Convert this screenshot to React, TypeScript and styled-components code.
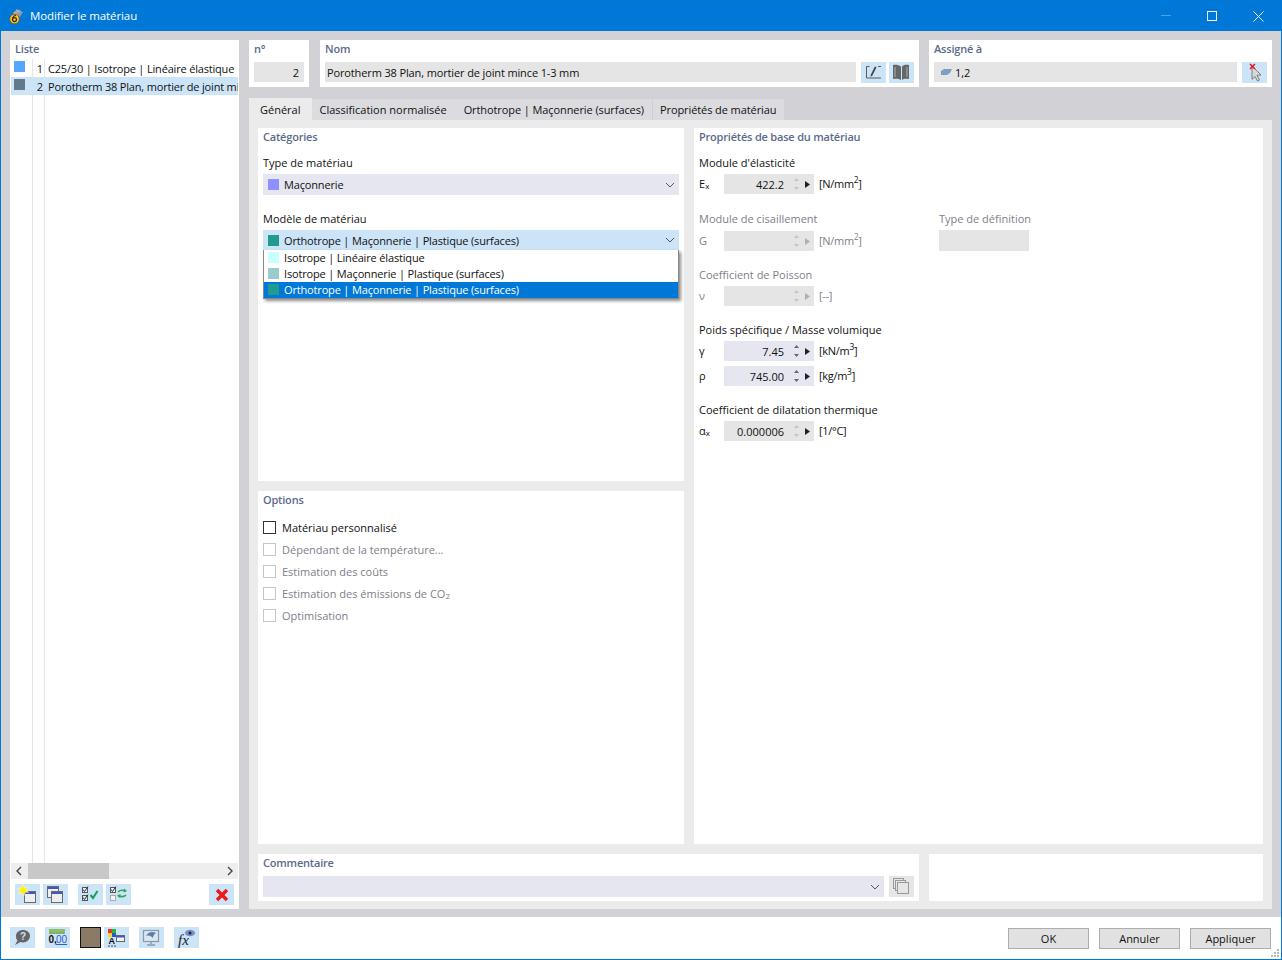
import React from "react";
import styled, { createGlobalStyle } from "styled-components";

const Global = createGlobalStyle`
  html, body { margin: 0; padding: 0; background: #fff; }
  * { box-sizing: border-box; }
  body { font-family: "Open Sans", "Noto Sans", "Liberation Sans", sans-serif; font-size: 11px; color: #111; }
`;

const Win = styled.div`
  width: 1282px; height: 960px; display: flex; flex-direction: column; overflow: hidden;
  border: 1px solid #0078d7; background: #fff; position: relative;
`;
const TitleBar = styled.div`
  height: 30px; background: #0078d7; color: #fff; display: flex; align-items: center; flex: none;
  padding-left: 7px; font-size: 11.5px;
`;
const TitleText = styled.span` margin-left: 6px; flex: 1; letter-spacing: -.1px; margin-top: -1px; `;
const WinBtn = styled.div`
  width: 46px; height: 30px; display: flex; align-items: center; justify-content: center;
`;
const Body = styled.div`
  flex: 1; background: #d2d1d6; display: flex; gap: 10px; padding: 9px 9px 8px 9px; min-height: 0;
`;
const ListPanel = styled.div`
  width: 229px; background: #fff; display: flex; flex-direction: column; flex: none; padding: 0 1px;
`;
const PanelTitle = styled.div`
  font-weight: 600; color: #5c6b8c; line-height: 14px; padding: 2px 0 0 4px; height: 19px; letter-spacing: -.2px;
`;
const ListBody = styled.div`
  flex: 1; position: relative; overflow: hidden; background:
    linear-gradient(#e6e6e6,#e6e6e6) 21px 0/1px 100% no-repeat,
    linear-gradient(#e6e6e6,#e6e6e6) 33px 0/1px 100% no-repeat;
`;
const ListRow = styled.div<{ $sel?: boolean }>`
  height: 18px; display: flex; align-items: center; white-space: nowrap; overflow: hidden;
  background: ${p => (p.$sel ? "#cce4f8" : "transparent")};
`;
const Swatch = styled.span<{ $c: string }>`
  display: inline-block; flex: none; width: 11px; height: 11px; background: ${p => p.$c};
`;
const ListSwatch = styled(Swatch)` margin: -3px 0 0 3px; `;
const ListNum = styled.span` width: 18px; text-align: right; flex: none; `;
const ListText = styled.span` margin-left: 5px; letter-spacing: -.18px; `;
const HScroll = styled.div`
  height: 16px; background: #eeeeee; display: flex; align-items: center; justify-content: space-between; position: relative; flex: none;
  padding: 0 5px;
`;
const Thumb = styled.div`
  position: absolute; left: 17px; top: 0; width: 81px; height: 16px; background: #c8c8c8;
`;
const ListTools = styled.div`
  height: 30px; display: flex; align-items: flex-start; padding: 5px 4px 0 4px; flex: none;
`;
const IconBtn = styled.div<{ $ml?: number; $disabled?: boolean }>`
  width: 25px; height: 21px; flex: none; display: flex; align-items: center; justify-content: center;
  background: ${p => (p.$disabled ? "#e6e6e6" : "#cce4f7")};
  margin-left: ${p => p.$ml ?? 0}px;
`;
const Main = styled.div` flex: 1; display: flex; flex-direction: column; min-width: 0; `;
const TopRow = styled.div`
  height: 47px; display: grid; grid-template-columns: 60px 600px 343px; column-gap: 10px; flex: none;
  & > :nth-child(2) { margin-left: 1px; }
`;
const Card = styled.div`
  background: #fff; display: flex; flex-direction: column; padding: 0 5px;
`;
const CardTitle = styled.div`
  font-weight: 600; color: #5c6b8c; line-height: 14px; padding-top: 2px; height: 22px; flex: none; letter-spacing: -.2px;
`;
const CardRow = styled.div` display: flex; gap: 3px; `;
const ReadField = styled.div<{ $right?: boolean }>`
  height: 20px; background: #e5e5e5; flex: 1; display: flex; align-items: center; padding: 0 5px 0 2px;
  justify-content: ${p => (p.$right ? "flex-end" : "flex-start")}; white-space: nowrap; letter-spacing: -.13px;
`;
const Tabs = styled.div` display: flex; margin-top: 11px; height: 22px; flex: none; align-items: flex-end; `;
const Tab = styled.div<{ $on?: boolean; $l?: number }>`
  height: ${p => (p.$on ? 22 : 21)}px; display: flex; align-items: center;
  padding: ${p => (p.$on ? "0 12px 0 11px" : `0 8px 0 ${p.$l ?? 7}px`)};
  background: ${p => (p.$on ? "#ebebeb" : "#dcdce0")}; white-space: nowrap;
`;
const TabLabel = styled.span<{ $tight?: boolean }>` letter-spacing: ${p => (p.$tight ? "-.09px" : "0")}; `;
const TabGap = styled.div` width: 1px; height: 21px; background: #cfcfd3; flex: none; `;
const TabPanel = styled.div`
  flex: 1; background: #ebebeb; padding: 8px 9px; display: flex; flex-direction: column; gap: 10px; min-height: 0;
`;
const Upper = styled.div` flex: 1; display: grid; grid-template-columns: 426px 569px; grid-template-rows: 353px 353px; gap: 10px; `;
const Lower = styled.div` height: 47px; flex: none; display: grid; grid-template-columns: 661px 334px; gap: 10px; `;
const Section = styled.div<{ $span?: boolean }>`
  background: #fff; padding: 0 5px; position: relative; display: flex; flex-direction: column;
  ${p => (p.$span ? "grid-row: 1 / span 2; grid-column: 2;" : "")}
`;
const SectionTitle = styled.div<{ $h?: number }>`
  font-weight: 600; color: #5c6b8c; line-height: 14px; height: ${p => p.$h ?? 28}px; padding-top: 2px; flex: none; letter-spacing: -.2px;
`;
const Label = styled.div<{ $dim?: boolean; $mt?: number }>`
  color: ${p => (p.$dim ? "#80808a" : "#111")}; line-height: 14px; height: 18px;
  margin-top: ${p => p.$mt ?? 0}px; white-space: nowrap;
`;
const Combo = styled.div<{ $focus?: boolean; $grow?: boolean; $h?: number }>`
  height: ${p => p.$h ?? 21}px; background: ${p => (p.$focus ? "#cce4f7" : "#e6e6f0")}; display: flex; align-items: center;
  padding: 0 4px 0 5px; gap: 5px; flex: ${p => (p.$grow ? 1 : "none")};
`;
const ComboText = styled.span` flex: 1; white-space: nowrap; letter-spacing: -.16px; `;
const Popup = styled.div`
  position: absolute; left: 5px; top: 122px; width: 416px; height: 49px; background: #fff; border: 1px solid #8a8a8a; border-top: 0;
  box-shadow: 2px 2px 3px rgba(0,0,0,.45); display: flex; flex-direction: column; z-index: 3;
`;
const PopItem = styled.div<{ $sel?: boolean }>`
  height: 16px; display: flex; align-items: center; gap: 5px; padding: 0 0 1px 4px; letter-spacing: -.16px; flex: none;
  background: ${p => (p.$sel ? "#0078d7" : "transparent")}; color: ${p => (p.$sel ? "#fff" : "#111")};
`;
const PropRow = styled.div<{ $mb?: number; $pt?: number }>`
  display: flex; align-items: flex-start; height: 21px; padding-top: ${p => p.$pt ?? 0}px; margin-bottom: ${p => p.$mb ?? 0}px;
`;
const Sym = styled.span<{ $dim?: boolean }>`
  width: 25px; flex: none; line-height: 20px; color: ${p => (p.$dim ? "#80808a" : "#111")};
  sub { font-size: 8px; vertical-align: baseline; position: relative; top: 1px; }
`;
const Spin = styled.div<{ $tone: "grey" | "blue" }>`
  width: 90px; height: 20px; flex: none; display: flex; align-items: center; padding-right: 2px;
  background: ${p => (p.$tone === "blue" ? "#e6e6f0" : "#e5e5e5")};
`;
const SpinVal = styled.span` flex: 1; text-align: right; padding-right: 6px; `;
const Stepper = styled.span` width: 12px; height: 20px; display: flex; align-items: center; justify-content: center; flex: none; `;
const Arrow = styled.span` width: 10px; height: 20px; display: flex; align-items: center; justify-content: center; flex: none; `;
const Unit = styled.span<{ $dim?: boolean }>`
  margin-left: 5px; line-height: 20px; letter-spacing: -.3px; color: ${p => (p.$dim ? "#80808a" : "#111")}; white-space: nowrap;
  sup { font-size: 8.5px; line-height: 0; }
`;
const PropSplit = styled.div` display: flex; `;
const PropCol = styled.div<{ $w?: number }>` width: ${p => (p.$w ? `${p.$w}px` : "auto")}; display: flex; flex-direction: column; `;
const DefField = styled.div` width: 90px; height: 21px; background: #e5e5e5; `;
const CheckRow = styled.div<{ $dim?: boolean }>`
  display: flex; align-items: center; height: 22px; gap: 6px; color: ${p => (p.$dim ? "#80808a" : "#111")};
  sub { font-size: 8px; vertical-align: baseline; position: relative; top: 1px; }
`;
const Box = styled.span<{ $dim?: boolean }>`
  width: 13px; height: 13px; flex: none; background: #fff; border: 1px solid ${p => (p.$dim ? "#c6c6c6" : "#333")};
`;
const CommentRow = styled.div` display: flex; gap: 5px; `;
const Footer = styled.div`
  height: 42px; flex: none; display: flex; align-items: flex-start; padding: 10px 10px 0 9px; position: relative;
`;
const Swatch2 = styled.div`
  width: 21px; height: 21px; background: #8b7a66; border: 1px solid #111; margin-left: 10px; flex: none;
`;
const Spacer = styled.div` flex: 1; `;
const DlgBtn = styled.div`
  width: 81px; height: 21px; margin-top: 1px; margin-left: 10px; background: #e1e1e1; border: 1px solid #adadad;
  display: flex; align-items: center; justify-content: center; flex: none;
`;
const Grip = styled.svg` position: absolute; right: 1px; bottom: 1px; `;
const ShapeIcon = styled.svg` margin: 0 3px 0 5px; flex: none; `;

const Chevron = () => (
  <svg width="10" height="6" viewBox="0 0 10 6"><path d="M1 1l4 4 4-4" fill="none" stroke="#555" strokeWidth="1" /></svg>
);
const Step = ({ dim }: { dim?: boolean }) => (
  <Stepper>
    <svg width="7" height="14" viewBox="0 0 7 14">
      <path d="M3.5 1L6 4H1z" fill={dim ? "#c4c4c4" : "#666"} />
      <path d="M3.5 13L1 10h5z" fill={dim ? "#c4c4c4" : "#666"} />
    </svg>
  </Stepper>
);
const Right = ({ dim }: { dim?: boolean }) => (
  <Arrow>
    <svg width="5" height="7" viewBox="0 0 5 7"><path d="M0 0l5 3.5L0 7z" fill={dim ? "#b0b0b0" : "#222"} /></svg>
  </Arrow>
);
const Ico = ({ children }: { children: React.ReactNode }) => (
  <svg width="25" height="21" viewBox="0 0 25 21">{children}</svg>
);
const WinIco = ({ x, y, w = 11, h = 11 }: { x: number; y: number; w?: number; h?: number }) => (
  <g>
    <rect x={x + 0.5} y={y + 0.5} width={w} height={h} fill="#efefef" stroke="#6a6a6a" />
    <rect x={x + 1} y={y + 1} width={w - 1} height="2" fill="#3f57c9" />
  </g>
);
const Prop = ({ sym, val, unit, tone, dimStep, dim, mb, pt }: { sym: React.ReactNode; val?: string; unit: React.ReactNode; tone: "grey" | "blue"; dimStep?: boolean; dim?: boolean; mb?: number; pt?: number }) => (
  <PropRow $mb={mb} $pt={pt}>
    <Sym $dim={dim}>{sym}</Sym>
    <Spin $tone={tone}>
      <SpinVal>{val}</SpinVal>
      <Step dim={dimStep} />
      <Right dim={dim} />
    </Spin>
    <Unit $dim={dim}>{unit}</Unit>
  </PropRow>
);

export default function App() {
  return (
    <>
      <Global />
      <Win>
        <TitleBar>
          <svg width="16" height="17" viewBox="0 0 16 17">
            <path d="M5 5L9 1l6 3-3 5z" fill="#8d97a8" />
            <path d="M6 4l4 3M8 2l4 3M5 6l7-4" stroke="#c8ced8" strokeWidth=".6" />
            <circle cx="6.5" cy="11" r="4.8" fill="#f3c52c" stroke="#7a5a10" strokeWidth=".8" />
            <circle cx="6.5" cy="11.6" r="2" fill="none" stroke="#3a2a08" strokeWidth="1.2" />
            <path d="M4.6 11.5C4.8 8.5 6 7.5 8 7.5" fill="none" stroke="#3a2a08" strokeWidth="1.2" />
          </svg>
          <TitleText>Modifier le matériau</TitleText>
          <WinBtn>
            <svg width="10" height="2" viewBox="0 0 10 2"><path d="M0 .5h10" stroke="#4aa0e6" /></svg>
          </WinBtn>
          <WinBtn>
            <svg width="10" height="10" viewBox="0 0 10 10"><rect x=".5" y=".5" width="9" height="9" fill="none" stroke="#fff" /></svg>
          </WinBtn>
          <WinBtn>
            <svg width="11" height="11" viewBox="0 0 11 11"><path d="M.5.5l10 10M10.5.5l-10 10" stroke="#fff" /></svg>
          </WinBtn>
        </TitleBar>
        <Body>
          <ListPanel>
            <PanelTitle>Liste</PanelTitle>
            <ListBody>
              <ListRow>
                <ListSwatch $c="#55a6ff" />
                <ListNum>1</ListNum>
                <ListText>C25/30 | Isotrope | Linéaire élastique</ListText>
              </ListRow>
              <ListRow $sel>
                <ListSwatch $c="#63798b" />
                <ListNum>2</ListNum>
                <ListText>Porotherm 38 Plan, mortier de joint mince 1-3 mm</ListText>
              </ListRow>
            </ListBody>
            <HScroll>
              <Thumb />
              <svg width="6" height="10" viewBox="0 0 6 10"><path d="M5 1L1 5l4 4" fill="none" stroke="#444" strokeWidth="1.4" /></svg>
              <svg width="6" height="10" viewBox="0 0 6 10"><path d="M1 1l4 4-4 4" fill="none" stroke="#444" strokeWidth="1.4" /></svg>
            </HScroll>
            <ListTools>
              <IconBtn>
                <Ico>
                  <WinIco x={9} y={7} />
                  <path d="M8 0.500L9.400 4 13 3l-2 3 2.500 2.300-3.400-.1L9 11.500 7.400 8.700 4 10l1.200-3.300L2.500 5l3.600-.4z" fill="#fff000" stroke="#fffbd0" strokeWidth=".5" />
                </Ico>
              </IconBtn>
              <IconBtn $ml={3}>
                <Ico>
                  <WinIco x={4} y={2} />
                  <WinIco x={8} y={7} />
                </Ico>
              </IconBtn>
              <IconBtn $ml={10}>
                <Ico>
                  <rect x="4.500" y="3.500" width="5" height="5" fill="#e8f2fa" stroke="#555" />
                  <rect x="4.500" y="11.500" width="5" height="5" fill="#d8e6f0" stroke="#555" />
                  <path d="M5 5.500l1.500 2 3.500-5M5 13.500l1.500 2 3.500-5" fill="none" stroke="#333" />
                  <path d="M12.500 11l2.500 3 4.500-7" fill="none" stroke="#13a052" strokeWidth="2" />
                </Ico>
              </IconBtn>
              <IconBtn $ml={3}>
                <Ico>
                  <rect x="4.500" y="3.500" width="5" height="5" fill="#e8f2fa" stroke="#555" />
                  <rect x="4.500" y="11.500" width="5" height="5" fill="#eef4f8" stroke="#aaa" />
                  <path d="M5 5.500l1.500 2 3.500-5" fill="none" stroke="#333" />
                  <path d="M12 8c2-2 5-2 8-1M20 11c-2 2-5 2-8 .5" fill="none" stroke="#2ea84b" strokeWidth="1.600" />
                  <path d="M18 4.500l3 2.500-3.500 1.500zM14 14l-3-2.500 3.500-1.500z" fill="#2ea84b" />
                </Ico>
              </IconBtn>
              <IconBtn $ml={78}>
                <svg width="14" height="14" viewBox="0 0 14 14"><path d="M2 2l10 10M12 2L2 12" stroke="#f01818" strokeWidth="3.400" /></svg>
              </IconBtn>
            </ListTools>
          </ListPanel>
          <Main>
            <TopRow>
              <Card>
                <CardTitle>n°</CardTitle>
                <CardRow>
                  <ReadField $right>2</ReadField>
                </CardRow>
              </Card>
              <Card>
                <CardTitle>Nom</CardTitle>
                <CardRow>
                  <ReadField>Porotherm 38 Plan, mortier de joint mince 1-3 mm</ReadField>
                  <IconBtn $ml={2}>
                    <Ico>
                      <path d="M8.500 4.500H5.500v11.500H20" fill="none" stroke="#5a5a5a" />
                      <path d="M9.500 15l.4-2.500 4-8 1.600.8-4 8z" fill="#444" />
                      <path d="M17 4.500h3" stroke="#5a5a5a" />
                    </Ico>
                  </IconBtn>
                  <IconBtn>
                    <Ico>
                      <path d="M4 3c3-.5 6 0 8 1.500V18c-2-1.200-5-1.500-8-1zM20 3c-3-.5-6 0-7 1.500V18c1-1.200 4-1.500 7-1z" fill="#666" />
                      <path d="M6 5v10M18 5v10" stroke="#b8c4d0" strokeWidth=".8" />
                    </Ico>
                  </IconBtn>
                </CardRow>
              </Card>
              <Card>
                <CardTitle>Assigné à</CardTitle>
                <CardRow>
                  <ReadField>
                    <ShapeIcon width="11" height="6" viewBox="0 0 11 6">
                      <path d="M0 2l3-2h8L9 4l-3 2H0z" fill="#7e9fc4" />
                    </ShapeIcon>
                    1,2
                  </ReadField>
                  <IconBtn $ml={2}>
                    <Ico>
                      <path d="M10 4l9 9-4 .3 2.500 4.700-2 1-2.500-4.500-3 2.800z" fill="#d8d8d8" stroke="#666" strokeWidth=".8" />
                      <path d="M8 2l5 5M13 2L8 7" stroke="#ee1122" strokeWidth="1.500" />
                    </Ico>
                  </IconBtn>
                </CardRow>
              </Card>
            </TopRow>
            <Tabs>
              <Tab $on><TabLabel>Général</TabLabel></Tab>
              <Tab><TabLabel>Classification normalisée</TabLabel></Tab>
              <Tab $l={9}><TabLabel $tight>Orthotrope | Maçonnerie (surfaces)</TabLabel></Tab>
              <TabGap />
              <Tab><TabLabel $tight>Propriétés de matériau</TabLabel></Tab>
            </Tabs>
            <TabPanel>
              <Upper>
                <Section>
                  <SectionTitle>Catégories</SectionTitle>
                  <Label>Type de matériau</Label>
                  <Combo>
                    <Swatch $c="#8f8fff" />
                    <ComboText>Maçonnerie</ComboText>
                    <Chevron />
                  </Combo>
                  <Label $mt={17}>Modèle de matériau</Label>
                  <Combo $focus $h={20}>
                    <Swatch $c="#219b8f" />
                    <ComboText>Orthotrope | Maçonnerie | Plastique (surfaces)</ComboText>
                    <Chevron />
                  </Combo>
                  <Popup>
                    <PopItem><Swatch $c="#c9ffff" />Isotrope | Linéaire élastique</PopItem>
                    <PopItem><Swatch $c="#99cccc" />Isotrope | Maçonnerie | Plastique (surfaces)</PopItem>
                    <PopItem $sel><Swatch $c="#219b8f" />Orthotrope | Maçonnerie | Plastique (surfaces)</PopItem>
                  </Popup>
                </Section>
                <Section $span>
                  <SectionTitle>Propriétés de base du matériau</SectionTitle>
                  <Label>Module d'élasticité</Label>
                  <Prop sym={<>E<sub>x</sub></>} val="422.2" unit={<>[N/mm<sup>2</sup>]</>} tone="grey" dimStep />
                  <PropSplit>
                    <PropCol $w={240}>
                      <Label $dim $mt={17}>Module de cisaillement</Label>
                      <Prop sym="G" unit={<>[N/mm<sup>2</sup>]</>} tone="grey" dimStep dim pt={1} />
                    </PropCol>
                    <PropCol>
                      <Label $dim $mt={17}>Type de définition</Label>
                      <DefField />
                    </PropCol>
                  </PropSplit>
                  <Label $dim $mt={17}>Coefficient de Poisson</Label>
                  <Prop sym="ν" unit="[--]" tone="grey" dimStep dim />
                  <Label $mt={16}>Poids spécifique / Masse volumique</Label>
                  <Prop sym="γ" val="7.45" unit={<>[kN/m<sup>3</sup>]</>} tone="blue" mb={4} />
                  <Prop sym="ρ" val="745.00" unit={<>[kg/m<sup>3</sup>]</>} tone="blue" />
                  <Label $mt={16}>Coefficient de dilatation thermique</Label>
                  <Prop sym={<>α<sub>x</sub></>} val="0.000006" unit="[1/°C]" tone="grey" dimStep />
                </Section>
                <Section>
                  <SectionTitle $h={25}>Options</SectionTitle>
                  <CheckRow><Box />Matériau personnalisé</CheckRow>
                  <CheckRow $dim><Box $dim />Dépendant de la température...</CheckRow>
                  <CheckRow $dim><Box $dim />Estimation des coûts</CheckRow>
                  <CheckRow $dim><Box $dim /><span>Estimation des émissions de CO<sub>2</sub></span></CheckRow>
                  <CheckRow $dim><Box $dim />Optimisation</CheckRow>
                </Section>
              </Upper>
              <Lower>
                <Section>
                  <CardTitle>Commentaire</CardTitle>
                  <CommentRow>
                    <Combo $grow>
                      <ComboText />
                      <Chevron />
                    </Combo>
                    <IconBtn $disabled>
                      <Ico>
                        <rect x="4.500" y="2.500" width="10" height="10" fill="none" stroke="#999" />
                        <rect x="6.500" y="4.500" width="10" height="10" fill="#e6e6e6" stroke="#999" />
                        <rect x="8.500" y="6.500" width="11" height="11" fill="#e6e6e6" stroke="#999" />
                      </Ico>
                    </IconBtn>
                  </CommentRow>
                </Section>
                <Section />
              </Lower>
            </TabPanel>
          </Main>
        </Body>
        <Footer>
          <IconBtn>
            <Ico>
              <path d="M13 3c4 0 7 2.500 7 6s-3 6.500-7 6.500c-1 0-1.800-.1-2.500-.4L5 18l2.500-4.500C6.500 12.500 6 11 6 9c0-3.500 3-6 7-6z" fill="#666" />
              <text x="10" y="13" fontSize="10" fontWeight="700" fill="#cce4f7" fontFamily="Liberation Sans">?</text>
            </Ico>
          </IconBtn>
          <IconBtn $ml={10}>
            <Ico>
              <rect x="4" y="2" width="16" height="5" fill="#8fbc6a" />
              <path d="M6 5v2M9 5v2M12 5v2M15 5v2M18 5v2" stroke="#5d8a40" strokeWidth=".7" />
              <text x="3.500" y="16" fontSize="10" fontWeight="700" fontFamily="Liberation Sans" fill="#111">0,</text>
              <text x="11" y="16" fontSize="10" fontFamily="Liberation Sans" fill="#2a5fd0" textDecoration="underline">00</text>
            </Ico>
          </IconBtn>
          <Swatch2 />
          <IconBtn $ml={3}>
            <Ico>
              <rect x="4" y="2" width="4" height="4" fill="#e33" />
              <rect x="8" y="2" width="4" height="4" fill="#2b3" />
              <rect x="4" y="6" width="4" height="4" fill="#eedd22" />
              <rect x="8" y="6" width="4" height="4" fill="#35c" />
              <text x="4.500" y="17" fontSize="9" fontWeight="700" fontFamily="Liberation Sans" fill="#111">A</text>
              <path d="M4 19h2M7 19h2M10 19h2" stroke="#444" />
              <rect x="12.500" y="8.500" width="8" height="6" fill="#f2f2f2" stroke="#666" />
              <rect x="13" y="9" width="7" height="1.500" fill="#3f57c9" />
            </Ico>
          </IconBtn>
          <IconBtn $ml={10}>
            <Ico>
              <rect x="4.500" y="3.500" width="15" height="11" fill="#dbe6ef" stroke="#8a97a5" strokeWidth="1.200" />
              <path d="M7 9c2-4 6-5 10-3-2 1-3 3-3 5-2-2-4-3-7-2z" fill="#5d7fa5" />
              <path d="M12 15v2M8 18h8" stroke="#8a97a5" strokeWidth="1.400" />
            </Ico>
          </IconBtn>
          <IconBtn $ml={10}>
            <Ico>
              <text x="4" y="18" fontSize="15" fontStyle="italic" fontFamily="Liberation Serif" fill="#222">fx</text>
              <ellipse cx="16" cy="6" rx="5" ry="3.200" fill="#7d8cc4" />
              <circle cx="16" cy="6" r="1.500" fill="#223" />
            </Ico>
          </IconBtn>
          <Spacer />
          <DlgBtn>OK</DlgBtn>
          <DlgBtn>Annuler</DlgBtn>
          <DlgBtn>Appliquer</DlgBtn>
          <Grip width="10" height="10" viewBox="0 0 10 10">
            <path d="M7 1h2v2H7zM4 4h2v2H4zM7 4h2v2H7zM1 7h2v2H1zM4 7h2v2H4zM7 7h2v2H7z" fill="#b8b8b8" />
          </Grip>
        </Footer>
      </Win>
    </>
  );
}
